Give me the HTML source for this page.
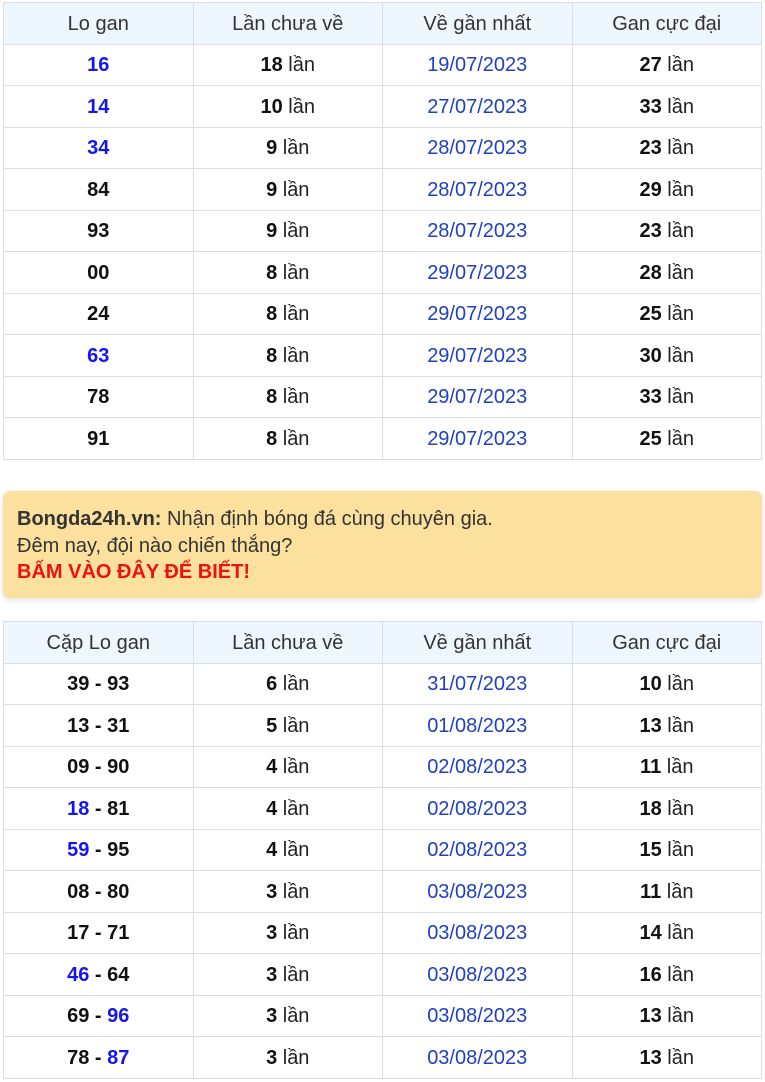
<!DOCTYPE html>
<html><head><meta charset="utf-8"><style>
body{margin:0;background:#fff;font-family:"Liberation Sans",Arial,sans-serif;font-size:20px;color:#222;}
table{position:absolute;left:3px;width:759px;border-collapse:collapse;table-layout:fixed;}
td,th{border:1px solid #dcdde3;text-align:center;padding:2px 0 0 0;height:38.5px;font-weight:normal;}
th{background:#eef6ff;color:#333;}
td b{color:#111}
.b{color:#1515ee;font-weight:bold}
.k{color:#111;font-weight:bold}
.d{color:#2040c0}
.ban{position:absolute;left:3px;top:491px;width:759px;height:107px;background:#fce09e;border-radius:7px;box-shadow:0 2px 6px rgba(0,0,0,.12);box-sizing:border-box;padding:15px 14px;line-height:26.5px;font-size:20px;color:#333}
.ban .r{color:#f01010;font-weight:bold}
</style></head><body>
<table style="top:2px">
<tr><th>Lo gan</th><th>Lần chưa về</th><th>Về gần nhất</th><th>Gan cực đại</th></tr>
<tr><td class="b">16</td><td><b>18</b> lần</td><td class="d">19/07/2023</td><td><b>27</b> lần</td></tr>
<tr><td class="b">14</td><td><b>10</b> lần</td><td class="d">27/07/2023</td><td><b>33</b> lần</td></tr>
<tr><td class="b">34</td><td><b>9</b> lần</td><td class="d">28/07/2023</td><td><b>23</b> lần</td></tr>
<tr><td class="k">84</td><td><b>9</b> lần</td><td class="d">28/07/2023</td><td><b>29</b> lần</td></tr>
<tr><td class="k">93</td><td><b>9</b> lần</td><td class="d">28/07/2023</td><td><b>23</b> lần</td></tr>
<tr><td class="k">00</td><td><b>8</b> lần</td><td class="d">29/07/2023</td><td><b>28</b> lần</td></tr>
<tr><td class="k">24</td><td><b>8</b> lần</td><td class="d">29/07/2023</td><td><b>25</b> lần</td></tr>
<tr><td class="b">63</td><td><b>8</b> lần</td><td class="d">29/07/2023</td><td><b>30</b> lần</td></tr>
<tr><td class="k">78</td><td><b>8</b> lần</td><td class="d">29/07/2023</td><td><b>33</b> lần</td></tr>
<tr><td class="k">91</td><td><b>8</b> lần</td><td class="d">29/07/2023</td><td><b>25</b> lần</td></tr>
</table>
<div class="ban"><b>Bongda24h.vn:</b> Nhận định bóng đá cùng chuyên gia.<br>Đêm nay, đội nào chiến thắng?<br><span class="r">BẤM VÀO ĐÂY ĐỂ BIẾT!</span></div>
<table style="top:621px">
<tr><th>Cặp Lo gan</th><th>Lần chưa về</th><th>Về gần nhất</th><th>Gan cực đại</th></tr>
<tr><td class="k">39 - 93</td><td><b>6</b> lần</td><td class="d">31/07/2023</td><td><b>10</b> lần</td></tr>
<tr><td class="k">13 - 31</td><td><b>5</b> lần</td><td class="d">01/08/2023</td><td><b>13</b> lần</td></tr>
<tr><td class="k">09 - 90</td><td><b>4</b> lần</td><td class="d">02/08/2023</td><td><b>11</b> lần</td></tr>
<tr><td class="k"><span class="b">18</span> - 81</td><td><b>4</b> lần</td><td class="d">02/08/2023</td><td><b>18</b> lần</td></tr>
<tr><td class="k"><span class="b">59</span> - 95</td><td><b>4</b> lần</td><td class="d">02/08/2023</td><td><b>15</b> lần</td></tr>
<tr><td class="k">08 - 80</td><td><b>3</b> lần</td><td class="d">03/08/2023</td><td><b>11</b> lần</td></tr>
<tr><td class="k">17 - 71</td><td><b>3</b> lần</td><td class="d">03/08/2023</td><td><b>14</b> lần</td></tr>
<tr><td class="k"><span class="b">46</span> - 64</td><td><b>3</b> lần</td><td class="d">03/08/2023</td><td><b>16</b> lần</td></tr>
<tr><td class="k">69 - <span class="b">96</span></td><td><b>3</b> lần</td><td class="d">03/08/2023</td><td><b>13</b> lần</td></tr>
<tr><td class="k">78 - <span class="b">87</span></td><td><b>3</b> lần</td><td class="d">03/08/2023</td><td><b>13</b> lần</td></tr>
</table>
</body></html>
